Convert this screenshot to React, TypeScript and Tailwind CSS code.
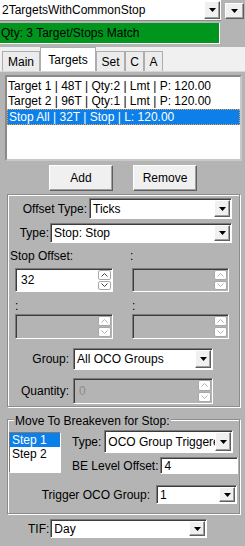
import React from 'react'

const sunken =
  'border border-t-[#7a7a7a] border-l-[#7a7a7a] border-b-white border-r-white shadow-[inset_1px_1px_0_#3c3c3c]'

function Tri() {
  return (
    <svg width="7" height="4" viewBox="0 0 7 4" className="block">
      <path d="M0 0h7L3.5 4z" fill="#000" />
    </svg>
  )
}

function DropBtn({ w = 'w-[16px]' }: { w?: string }) {
  return (
    <div
      className={`${w} shrink-0 my-[1px] mr-[1px] bg-[#f0f0f0] border border-t-white border-l-white border-b-[#5f5f5f] border-r-[#5f5f5f] shadow-[inset_-1px_-1px_0_#a0a0a0] flex items-center justify-center`}
    >
      <Tri />
    </div>
  )
}

function Combo({ text, cls }: { text: string; cls: string }) {
  return (
    <div className={`flex bg-white ${sunken} ${cls}`}>
      <span className="flex-1 min-w-0 pl-[3px] self-center whitespace-nowrap overflow-hidden">{text}</span>
      <DropBtn />
    </div>
  )
}

function Chevron({ up, color }: { up?: boolean; color: string }) {
  return (
    <svg width="7" height="4" viewBox="0 0 7 4" className="block">
      <path d={up ? 'M0.5 3.5L3.5 0.5L6.5 3.5' : 'M0.5 0.5L3.5 3.5L6.5 0.5'} stroke={color} fill="none" />
    </svg>
  )
}

function Spin({ value, disabled, cls }: { value?: string; disabled?: boolean; cls: string }) {
  const c = disabled ? '#b0b0b0' : '#404040'
  return (
    <div className={`flex ${disabled ? 'bg-[#b4b4b4]' : 'bg-white'} ${sunken} ${cls}`}>
      <span className={`flex-1 pl-[5px] self-center ${disabled ? 'text-[#8c8c8c]' : ''}`}>{value}</span>
      <div className="flex flex-col w-[13px] my-[1px] mr-[1px] gap-[1px]">
        <div className="flex-1 bg-white border border-[#a8a8a8] rounded-[2px] flex items-center justify-center">
          <Chevron up color={c} />
        </div>
        <div className="flex-1 bg-white border border-[#a8a8a8] rounded-[2px] flex items-center justify-center">
          <Chevron color={c} />
        </div>
      </div>
    </div>
  )
}

function Tab({ label, w, active }: { label: string; w: string; active?: boolean }) {
  return (
    <div
      className={`${w} flex items-center justify-center border border-b-0 border-[#adadad] ${
        active ? 'h-[24px] bg-white' : 'h-[20px] bg-[#ececec]'
      }`}
    >
      {label}
    </div>
  )
}

export default function App() {
  return (
    <div className="w-[245px] h-[546px] overflow-hidden bg-[#b4b4b4] text-[12px] leading-[14px] text-black font-['Liberation_Sans',Arial,sans-serif]">
      {/* strategy selector */}
      <div className="flex h-[21px]">
        <div className="w-[221px] h-[21px] bg-white border-b border-[#8a8a8a] flex">
          <span className="flex-1 pl-[2px] self-center">2TargetsWithCommonStop</span>
          <DropBtn />
        </div>
        <div className="ml-[4px] mt-[2px] h-[18px] flex">
          <DropBtn w="w-[19px]" />
        </div>
      </div>

      {/* status */}
      <div className="mt-[2px] h-[21px] w-[220px] bg-[#00961e] border-b border-r border-white flex items-center pl-[1px]">
        Qty: 3 Target/Stops Match
      </div>

      {/* tabs */}
      <div className="mt-[3px] h-[24px] bg-[#f0f0f0] flex items-end pl-[2px]">
        <Tab label="Main" w="w-[38px]" />
        <Tab label="Targets" w="w-[56px]" active />
        <Tab label="Set" w="w-[29px]" />
        <Tab label="C" w="w-[19px]" />
        <Tab label="A" w="w-[19px]" />
      </div>

      {/* panel */}
      <div className="pt-[3px] border-t border-[#d6d6d6]">
        <div className="ml-[5px] w-[237px] h-[86px] bg-white border-2 border-t-[#8a8a8a] border-l-[#8a8a8a] border-b-[#c8c8c8] border-r-[#c8c8c8] pt-[2px] whitespace-nowrap">
          <div className="h-[15px] pl-[1px] leading-[15px]">Target 1 | 48T | Qty:2 | Lmt | P: 120.00</div>
          <div className="h-[15px] pl-[1px] leading-[15px]">Target 2 | 96T | Qty:1 | Lmt | P: 120.00</div>
          <div className="h-[16px] pl-[1px] leading-[14px] bg-[#0c7fe8] text-white border border-dotted border-[#f0a040]">
            Stop All | 32T | Stop | L: 120.00
          </div>
        </div>

        <div className="flex mt-[4px] h-[26px]">
          <button className="ml-[49px] w-[64px] bg-[#f0f0f0] border border-t-white border-l-white border-b-[#5f5f5f] border-r-[#5f5f5f] shadow-[inset_-1px_-1px_0_#a0a0a0]">
            Add
          </button>
          <button className="ml-[20px] w-[64px] bg-[#f0f0f0] border border-t-white border-l-white border-b-[#5f5f5f] border-r-[#5f5f5f] shadow-[inset_-1px_-1px_0_#a0a0a0]">
            Remove
          </button>
        </div>

        {/* offset group */}
        <div className="mt-[3px] ml-[7px] w-[233px] h-[213px] border border-[#8c8c8c] shadow-[inset_1px_1px_0_#fff,1px_1px_0_#fff]">
          <div className="mt-[3px] flex h-[21px]">
            <div className="w-[81px] pr-[2px] text-right self-center">Offset Type:</div>
            <Combo text="Ticks" cls="w-[143px]" />
          </div>
          <div className="mt-[4px] flex h-[20px]">
            <div className="w-[42px] pr-[1px] text-right self-center">Type:</div>
            <Combo text="Stop: Stop" cls="w-[182px]" />
          </div>
          <div className="mt-[6px] flex h-[14px]">
            <div className="pl-[2px] w-[122px]">Stop Offset:</div>
            <div>:</div>
          </div>
          <div className="mt-[5px] flex h-[24px] pl-[7px] gap-[19px]">
            <Spin value="32" cls="w-[98px]" />
            <Spin disabled cls="w-[97px]" />
          </div>
          <div className="mt-[7px] flex h-[14px] pl-[7px]">
            <div className="w-[117px]">:</div>
            <div>:</div>
          </div>
          <div className="mt-[1px] flex h-[25px] pl-[7px] gap-[19px]">
            <Spin disabled cls="w-[98px]" />
            <Spin disabled cls="w-[97px]" />
          </div>
          <div className="mt-[9px] flex h-[22px]">
            <div className="w-[65px] pr-[4px] text-right self-center">Group:</div>
            <Combo text="All OCO Groups" cls="w-[140px]" />
          </div>
          <div className="mt-[8px] flex h-[26px]">
            <div className="w-[65px] pr-[4px] text-right self-center">Quantity:</div>
            <Spin value="0" disabled cls="w-[140px]" />
          </div>
        </div>

        {/* breakeven group */}
        <div className="relative mt-[12px] ml-[7px] w-[233px] h-[95px] border border-[#8c8c8c] shadow-[inset_1px_1px_0_#fff,1px_1px_0_#fff]">
          <div className="absolute -top-[6px] left-[6px] px-[1px] bg-[#b4b4b4]">Move To Breakeven for Stop:</div>
          <div className="mt-[10px] flex items-start">
            <div className="mt-[2px] ml-[1px] w-[52px] h-[41px] bg-white border border-t-[#7a7a7a] border-l-[#7a7a7a] border-b-white border-r-white">
              <div className="h-[14px] bg-[#0c7fe8] text-white pl-[2px]">Step 1</div>
              <div className="h-[14px] pl-[2px]">Step 2</div>
            </div>
            <div className="flex flex-col">
              <div className="flex h-[23px] ml-[11px]">
                <span className="self-center">Type:</span>
                <Combo text="OCO Group Triggered" cls="ml-[3px] w-[129px]" />
              </div>
              <div className="flex h-[17px] ml-[11px] mt-[4px]">
                <span className="self-center">BE Level Offset:</span>
                <div className={`ml-[1px] w-[78px] bg-white pl-[4px] flex items-center ${sunken}`}>4</div>
              </div>
            </div>
          </div>
          <div className="mt-[11px] flex h-[19px] justify-end pr-[2px] gap-[6px]">
            <span className="self-center">Trigger OCO Group:</span>
            <Combo text="1" cls="w-[81px]" />
          </div>
        </div>

        <div className="mt-[5px] flex h-[19px] pl-[28px]">
          <span className="self-center">TIF:</span>
          <Combo text="Day" cls="ml-[1px] w-[157px]" />
        </div>
      </div>
    </div>
  )
}
